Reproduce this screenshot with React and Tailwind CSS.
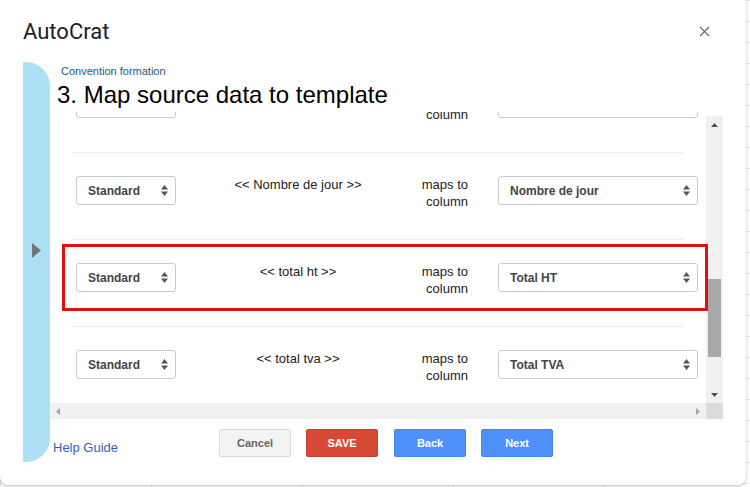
import { X } from "lucide-react";

const rows = [
  { tag: "", column: "Date de début" },
  { tag: "<< Nombre de jour >>", column: "Nombre de jour" },
  { tag: "<< total ht >>", column: "Total HT" },
  { tag: "<< total tva >>", column: "Total TVA" },
];

function Arrows() {
  return (
    <svg width="7" height="11" viewBox="0 0 7 11" className="shrink-0">
      <polygon points="0,4.5 3.5,0 7,4.5" fill="#555" />
      <polygon points="0,6.5 7,6.5 3.5,11" fill="#555" />
    </svg>
  );
}

function Select({ value, className }) {
  return (
    <div
      className={`flex h-[29px] shrink-0 items-center justify-between rounded-[3px] border border-[#cacaca] bg-white pl-[11px] pr-[7px] text-[12px] font-bold text-[#444] ${className}`}
    >
      <span>{value}</span>
      <Arrows />
    </div>
  );
}

function Row({ tag, column, hidden }) {
  return (
    <div className="ml-[22px] box-border h-[87px] w-[611px] border-t border-[#ebebeb] pl-[4px] pt-[23px]">
      <div className="flex w-[630px] items-start">
        <Select value={hidden ? "" : "Standard"} className="w-[100px]" />
        <div className="w-[244px] text-center text-[13px] leading-[17px] text-[#222]">{tag}</div>
        <div className="w-[48px] text-right text-[13px] leading-[17px] text-[#222]">
          {hidden ? "" : "maps to"}
          <br />
          column
        </div>
        <Select value={hidden ? "" : column} className="ml-[30px] w-[200px]" />
      </div>
    </div>
  );
}

function Triangle({ dir, color }) {
  const points = {
    up: "0,4 3.5,0 7,4",
    down: "0,0 7,0 3.5,4",
    left: "4,0 4,7 0,3.5",
    right: "0,0 0,7 4,3.5",
  }[dir];
  const vertical = dir === "up" || dir === "down";
  return (
    <svg width={vertical ? 7 : 4} height={vertical ? 4 : 7} viewBox={vertical ? "0 0 7 4" : "0 0 4 7"}>
      <polygon points={points} fill={color} />
    </svg>
  );
}

export default function App() {
  return (
    <div className="relative h-[487px] w-[750px] overflow-hidden bg-white bg-[linear-gradient(#e2e2e2_1px,transparent_1px),linear-gradient(90deg,#e2e2e2_1px,transparent_1px)] bg-[size:151px_21px] font-['Liberation_Sans',Arial,sans-serif]">
      <div className="flex h-[485px] w-[746px] flex-col rounded-b-[8px] bg-white shadow-[0_1px_3px_rgba(60,64,67,0.35)]">
        <header className="flex h-[62px] shrink-0 items-center justify-between pl-[23px] pr-[33px] pt-[1px]">
          <h1 className="font-['Roboto',sans-serif] text-[22px] leading-none text-[#202124]">AutoCrat</h1>
          <X size={17} strokeWidth={1.6} className="text-[#5f6368]" />
        </header>

        <div className="flex">
          <div className="ml-[23px] flex h-[400px] w-[27px] shrink-0 justify-center rounded-r-[24px] bg-[#aee0f5] pt-[181px]">
            <svg width="9" height="15" viewBox="0 0 9 15">
              <polygon points="0,0 9,7.5 0,15" fill="#747474" />
            </svg>
          </div>

          <div className="w-[673px]">
            <p className="pl-[11px] pt-[3px] text-[11px] leading-[13px] text-[#1d5b7b]">Convention formation</p>
            <h2 className="mt-[3px] pl-[7px] text-[24px] leading-[28px] text-black">3. Map source data to template</h2>

            <div className="relative mt-[3px]">
              <div className="flex">
                <div className="h-[291px] w-[656px] overflow-hidden">
                  <div className="-mt-[47px]">
                    {rows.map((row, index) => (
                      <Row key={row.column} tag={row.tag} column={row.column} hidden={index === 0} />
                    ))}
                  </div>
                </div>
                <div className="mt-[4px] flex h-[287px] w-[17px] flex-col items-center bg-[#f1f1f1]">
                  <div className="flex h-[17px] items-center">
                    <Triangle dir="up" color="#505050" />
                  </div>
                  <div className="h-[146px]" />
                  <div className="h-[78px] w-[13px] bg-[#a8a8a8]" />
                  <div className="flex-1" />
                  <div className="flex h-[17px] items-center">
                    <Triangle dir="down" color="#505050" />
                  </div>
                </div>
              </div>
              <div className="flex h-[16px]">
                <div className="flex w-[656px] items-center justify-between bg-[#f1f1f1] px-[6px]">
                  <Triangle dir="left" color="#a3a3a3" />
                  <Triangle dir="right" color="#a3a3a3" />
                </div>
                <div className="w-[17px] bg-[#dcdcdc]" />
              </div>

              <div className="absolute left-[12px] top-[132px] h-[67px] w-[646px] border-[3px] border-[#e01010]" />
            </div>

            <footer className="flex items-start pt-[10px]">
              <a className="ml-[3px] mt-[11px] text-[13px] leading-[16px] text-[#3b5cba]">Help Guide</a>
              <div className="ml-[101px] flex gap-[15px]">
                <button className="h-[28px] w-[72px] rounded-[2px] border border-[#d9d9d9] bg-[#f3f3f3] text-[11px] font-bold text-[#666]">
                  Cancel
                </button>
                <button className="h-[28px] w-[72px] rounded-[2px] border border-[#c5402f] bg-[#d84a38] text-[11px] font-bold text-white">
                  SAVE
                </button>
                <button className="ml-[1px] h-[28px] w-[72px] rounded-[2px] border border-[#3f86f0] bg-[#4d90fe] text-[11px] font-bold text-white">
                  Back
                </button>
                <button className="h-[28px] w-[72px] rounded-[2px] border border-[#3f86f0] bg-[#4d90fe] text-[11px] font-bold text-white">
                  Next
                </button>
              </div>
            </footer>
          </div>
        </div>
      </div>
    </div>
  );
}
